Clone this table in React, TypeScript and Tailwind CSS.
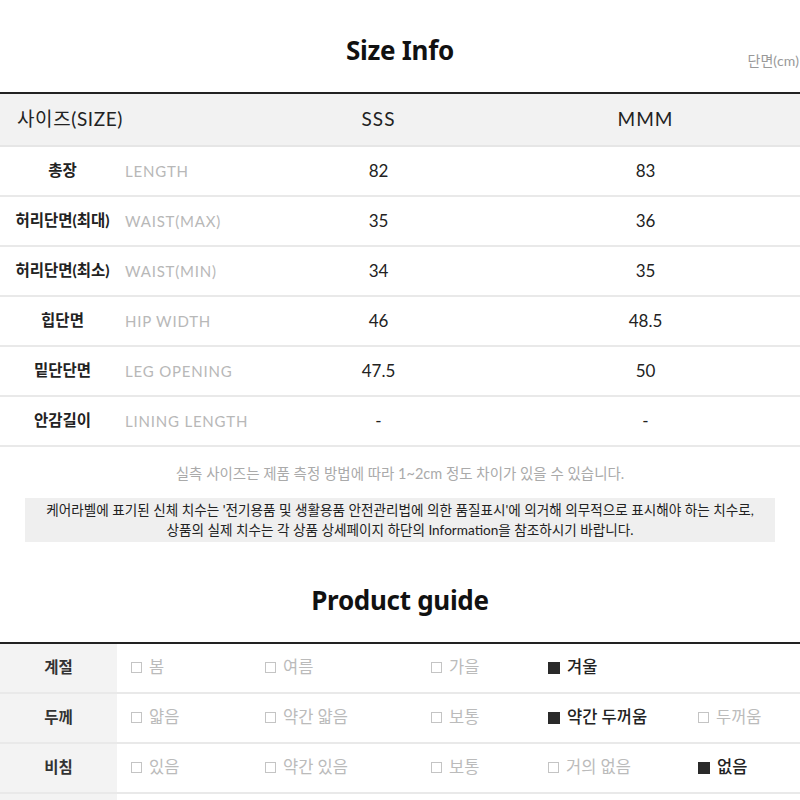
const FONT = "font-['Lato','Noto_Sans_CJK_KR',sans-serif]";

const sizeRows = [
  { ko: "총장", en: "LENGTH", s: "82", m: "83" },
  { ko: "허리단면(최대)", en: "WAIST(MAX)", s: "35", m: "36" },
  { ko: "허리단면(최소)", en: "WAIST(MIN)", s: "34", m: "35" },
  { ko: "힙단면", en: "HIP WIDTH", s: "46", m: "48.5" },
  { ko: "밑단단면", en: "LEG OPENING", s: "47.5", m: "50" },
  { ko: "안감길이", en: "LINING LENGTH", s: "-", m: "-" },
];

type Opt = { label: string; on?: boolean };

const guideRows: { name: string; opts: Opt[] }[] = [
  { name: "계절", opts: [{ label: "봄" }, { label: "여름" }, { label: "가을" }, { label: "겨울", on: true }] },
  {
    name: "두께",
    opts: [{ label: "얇음" }, { label: "약간 얇음" }, { label: "보통" }, { label: "약간 두꺼움", on: true }, { label: "두꺼움" }],
  },
  {
    name: "비침",
    opts: [{ label: "있음" }, { label: "약간 있음" }, { label: "보통" }, { label: "거의 없음" }, { label: "없음", on: true }],
  },
];

function Box({ on }: { on?: boolean }) {
  return on ? (
    <span className="inline-block w-[12px] h-[12px] bg-[#2a2a2a] mr-[7px]" />
  ) : (
    <span className="inline-block w-[11px] h-[11px] border border-[#c4c4c4] mr-[7px]" />
  );
}

export default function App() {
  return (
    <div className={`w-[800px] h-[800px] overflow-hidden bg-white ${FONT}`}>
      <div className="relative h-[92px]">
        <h2 className="pt-[31px] text-center text-[26px] font-bold text-[#111] tracking-[-0.3px] font-['Noto_Sans',sans-serif]">
          Size Info
        </h2>
        <span className="absolute right-[1px] top-[50px] text-[14px] text-[#999] whitespace-nowrap">단면(cm)</span>
      </div>

      <div className="border-t-2 border-[#222]">
        <div className="grid grid-cols-[245px_267px_267px_1fr] h-[53px] items-center bg-[#f2f2f2] border-b-2 border-[#e6e6e6] text-[19px] text-[#222]">
          <div className="pl-[17px] tracking-[0.6px]">사이즈(SIZE)</div>
          <div className="text-center tracking-[1px]">SSS</div>
          <div className="text-center tracking-[1px]">MMM</div>
          <div />
        </div>
        {sizeRows.map((r) => (
          <div
            key={r.ko}
            className="grid grid-cols-[125px_120px_267px_267px_1fr] h-[50px] items-center border-b-2 border-[#e9e9e9]"
          >
            <div className="text-center text-[15.5px] font-bold text-[#222] whitespace-nowrap">{r.ko}</div>
            <div className="text-[15px] text-[#b8b8b8] tracking-[0.8px] whitespace-nowrap">{r.en}</div>
            <div className="text-center text-[17px] text-[#222]">{r.s}</div>
            <div className="text-center text-[17px] text-[#222]">{r.m}</div>
            <div />
          </div>
        ))}
      </div>

      <p className="mt-[16px] text-center text-[14.5px] text-[#aaa]">
        실측 사이즈는 제품 측정 방법에 따라 1~2cm 정도 차이가 있을 수 있습니다.
      </p>
      <div className="mx-[25px] mt-[13px] h-[44px] bg-[#efefef] flex flex-col justify-center text-center text-[13.6px] leading-[20px] text-[#222]">
        <p>케어라벨에 표기된 신체 치수는 '전기용품 및 생활용품 안전관리법에 의한 품질표시'에 의거해 의무적으로 표시해야 하는 치수로,</p>
        <p>상품의 실제 치수는 각 상품 상세페이지 하단의 Information을 참조하시기 바랍니다.</p>
      </div>

      <h2 className="mt-[39px] text-center text-[26px] font-bold text-[#111] tracking-[-0.3px] font-['Noto_Sans',sans-serif]">
        Product guide
      </h2>

      <div className="mt-[22px] border-t-2 border-[#222]">
        {guideRows.map((g) => (
          <div
            key={g.name}
            className="grid grid-cols-[117px_134px_166px_117px_150px_1fr] h-[50px] items-center border-b-2 border-[#e9e9e9]"
          >
            <div className="h-full flex items-center justify-center bg-[#f3f3f3] text-[15.5px] font-bold text-[#333]">
              {g.name}
            </div>
            {g.opts.map((o) => (
              <div
                key={o.label}
                className={`pl-[14px] flex items-center text-[16.5px] whitespace-nowrap ${
                  o.on ? "text-[#222] font-medium" : "text-[#bbb]"
                }`}
              >
                <Box on={o.on} />
                {o.label}
              </div>
            ))}
          </div>
        ))}
        <div className="grid grid-cols-[117px_1fr] h-[50px]">
          <div className="bg-[#f3f3f3]" />
          <div />
        </div>
      </div>
    </div>
  );
}
